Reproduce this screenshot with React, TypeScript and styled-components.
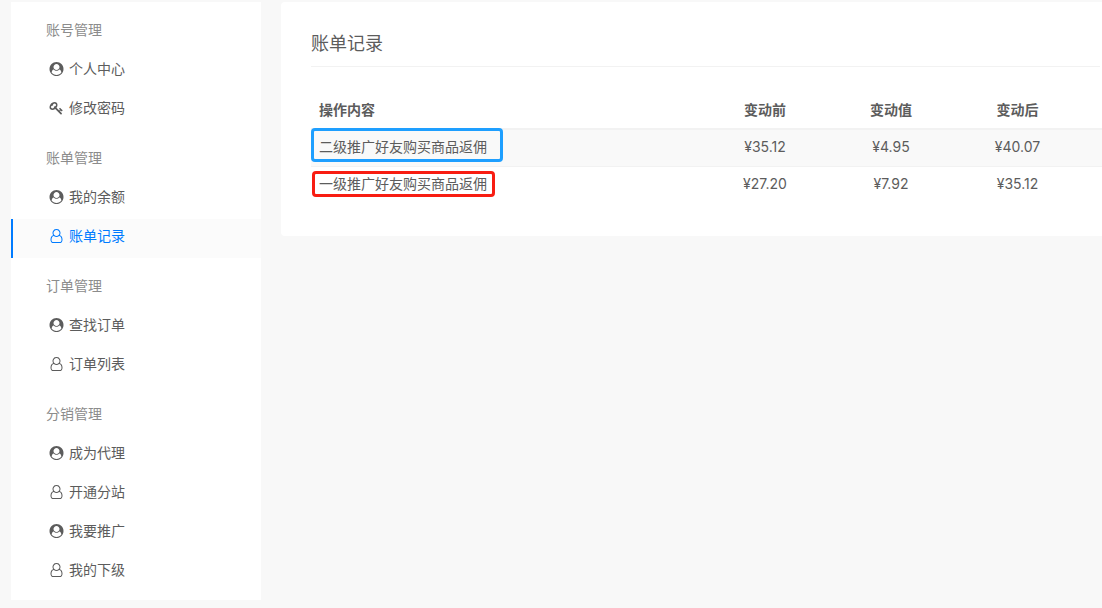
import React from "react";
import styled, { createGlobalStyle } from "styled-components";

const GlobalStyle = createGlobalStyle`
  * { box-sizing: border-box; }
  body {
    margin: 0;
    background: #f8f8f8;
    color: #5c5c5c;
    font-family: Inter, "Noto Sans CJK SC", sans-serif;
    font-size: 14px;
    line-height: 20px;
  }
`;

const Page = styled.div`
  display: flex;
  align-items: flex-start;
  gap: 20px;
  padding: 2px 0 8px 11px;
`;

const Sidebar = styled.nav`
  flex: 0 0 250px;
  padding-bottom: 8px;
  background: #fff;
`;

const GroupTitle = styled.h2`
  height: 50px;
  margin: 0;
  padding: 18px 0 0 35px;
  color: #8c8c8c;
  font-size: 14px;
  font-weight: 400;
`;

const Menu = styled.ul`
  margin: 0;
  padding: 0;
  list-style: none;
`;

const MenuLink = styled.a<{ $active?: boolean }>`
  display: flex;
  align-items: center;
  gap: 5px;
  height: 39px;
  padding: 0 0 6px 36px;
  border-left: 2px solid ${(p) => (p.$active ? "#007bff" : "transparent")};
  background: ${(p) => (p.$active ? "#fbfbfb" : "transparent")};
  color: ${(p) => (p.$active ? "#007bff" : "#5c5c5c")};
  text-decoration: none;
`;

const Icon = styled.svg`
  width: 15px;
  height: 14px;
  fill: currentColor;
`;

const Panel = styled.main`
  flex: 1;
  min-width: 0;
  padding: 30px 0 32px 30px;
  border-radius: 4px 0 0 4px;
  background: #fff;
`;

const Title = styled.h1`
  margin: 0 2px 24px 0;
  padding-bottom: 10px;
  border-bottom: 1px solid #f2f2f2;
  font-size: 18px;
  font-weight: 400;
  line-height: 24px;
`;

const Table = styled.table`
  width: 100%;
  border-collapse: separate;
  border-spacing: 0;
  table-layout: fixed;
`;

const HeadCell = styled.th<{ $width?: number }>`
  width: ${(p) => (p.$width ? `${p.$width}px` : "auto")};
  height: 39px;
  padding: 0;
  border-bottom: 2px solid #f2f2f2;
  text-align: center;
  font-weight: 700;
  &:first-child { padding-left: 8px; text-align: left; }
  &:last-child { padding-right: 21px; }
`;

const Row = styled.tr`
  &:nth-child(odd) { background: #f9f9f9; }
  &:not(:last-child) td { border-bottom: 1px solid #f2f2f2; }
`;

const Cell = styled.td`
  height: 37px;
  padding: 7px 0 0;
  text-align: center;
  vertical-align: top;
  &:first-child { text-align: left; }
  &:last-child { padding-right: 21px; }
`;

const Mark = styled.span<{ $tone: "blue" | "red" }>`
  display: block;
  width: ${(p) => (p.$tone === "blue" ? 192 : 183)}px;
  margin: ${(p) => (p.$tone === "blue" ? "-9px 0 -5px" : "-3px 0 -3px 1px")};
  padding: ${(p) => (p.$tone === "blue" ? "6px 5px 2px" : "0 4px")};
  border: 3px solid ${(p) => (p.$tone === "blue" ? "#1e9fff" : "#f81d12")};
  border-radius: 4px;
`;

const paths = {
  circle: {
    box: "0 0 1792 1792",
    d: "M1523 1339q-22-155-87.5-257.5t-184.5-118.5q-67 74-159.5 115.5t-195.5 41.5-195.5-41.5-159.5-115.5q-119 16-184.5 118.5t-87.5 257.5q106 150 271 237.5t356 87.5 356-87.5 271-237.5zm-243-699q0-159-112.5-271.5t-271.5-112.5-271.5 112.5-112.5 271.5 112.5 271.5 271.5 112.5 271.5-112.5 112.5-271.5zm512 256q0 182-71 347.5t-190.5 286-285.5 191.5-349 71q-182 0-348-71t-286-191-191-286-71-348 71-348 191-286 286-191 348-71 348 71 286 191 191 286 71 348z",
  },
  user: {
    box: "0 0 1536 1792",
    d: "M1201 784q47 14 89.5 38t89 73 79.5 115.5 55 172 22 236.5q0 154-100 263.5t-241 109.5h-854q-141 0-241-109.5t-100-263.5q0-131 22-236.5t55-172 79.5-115.5 89-73 89.5-38q-79-125-79-272 0-104 40.5-198.5t109.5-163.5 163.5-109.5 198.5-40.5 198.5 40.5 163.5 109.5 109.5 163.5 40.5 198.5q0 147-79 272zm-433-656q-159 0-271.5 112.5t-112.5 271.5 112.5 271.5 271.5 112.5 271.5-112.5 112.5-271.5-112.5-271.5-271.5-112.5zm427 1536q88 0 150.5-71.5t62.5-173.5q0-239-78.5-377t-225.5-145q-145 127-336 127t-336-127q-147 7-225.5 145t-78.5 377q0 102 62.5 173.5t150.5 71.5h854z",
  },
  key: {
    box: "0 0 1792 1792",
    d: "M832 512q0-80-56-136t-136-56-136 56-56 136q0 42 19 83-41-19-83-19-80 0-136 56t-56 136 56 136 136 56 136-56 56-136q0-42-19-83 41 19 83 19 80 0 136-56t56-136zm851 704q0 17-49 66t-66 49q-9 0-28.5-16t-36.5-33-38.5-40-24.5-26l-96 96 220 220q28 28 28 68 0 42-39 81t-81 39q-40 0-68-28l-671-671q-176 131-365 131-163 0-265.5-102.5t-102.5-265.5q0-160 95-313t248-248 313-95q163 0 265.5 102.5t102.5 265.5q0 189-131 365l355 355 96-96q-3-3-26-24.5t-40-38.5-33-36.5-16-28.5q0-17 49-66t66-49q13 0 23 10 6 6 46 44.5t82 79.5 86.5 86 73 78 28.5 41z",
  },
};

type IconName = keyof typeof paths;

const groups: { title: string; items: [IconName, string][] }[] = [
  { title: "账号管理", items: [["circle", "个人中心"], ["key", "修改密码"]] },
  { title: "账单管理", items: [["circle", "我的余额"], ["user", "账单记录"]] },
  { title: "订单管理", items: [["circle", "查找订单"], ["user", "订单列表"]] },
  {
    title: "分销管理",
    items: [["circle", "成为代理"], ["user", "开通分站"], ["circle", "我要推广"], ["user", "我的下级"]],
  },
];

const records: { tone: "blue" | "red"; text: string; amounts: string[] }[] = [
  { tone: "blue", text: "二级推广好友购买商品返佣", amounts: ["¥35.12", "¥4.95", "¥40.07"] },
  { tone: "red", text: "一级推广好友购买商品返佣", amounts: ["¥27.20", "¥7.92", "¥35.12"] },
];

const current = "账单记录";

export default function App() {
  return (
    <>
      <GlobalStyle />
      <Page lang="zh-CN">
        <Sidebar>
          {groups.map((group) => (
            <section key={group.title}>
              <GroupTitle>{group.title}</GroupTitle>
              <Menu>
                {group.items.map(([icon, label]) => (
                  <li key={label}>
                    <MenuLink
                      href="#"
                      $active={label === current}
                      aria-current={label === current ? "page" : undefined}
                    >
                      <Icon viewBox={paths[icon].box} aria-hidden="true">
                        <path d={paths[icon].d} />
                      </Icon>
                      {label}
                    </MenuLink>
                  </li>
                ))}
              </Menu>
            </section>
          ))}
        </Sidebar>
        <Panel>
          <Title>账单记录</Title>
          <Table>
            <thead>
              <tr>
                <HeadCell scope="col">操作内容</HeadCell>
                <HeadCell scope="col" $width={126}>变动前</HeadCell>
                <HeadCell scope="col" $width={126}>变动值</HeadCell>
                <HeadCell scope="col" $width={148}>变动后</HeadCell>
              </tr>
            </thead>
            <tbody>
              {records.map((record) => (
                <Row key={record.text}>
                  <Cell><Mark $tone={record.tone}>{record.text}</Mark></Cell>
                  {record.amounts.map((amount, i) => (
                    <Cell key={i}>{amount}</Cell>
                  ))}
                </Row>
              ))}
            </tbody>
          </Table>
        </Panel>
      </Page>
    </>
  );
}
